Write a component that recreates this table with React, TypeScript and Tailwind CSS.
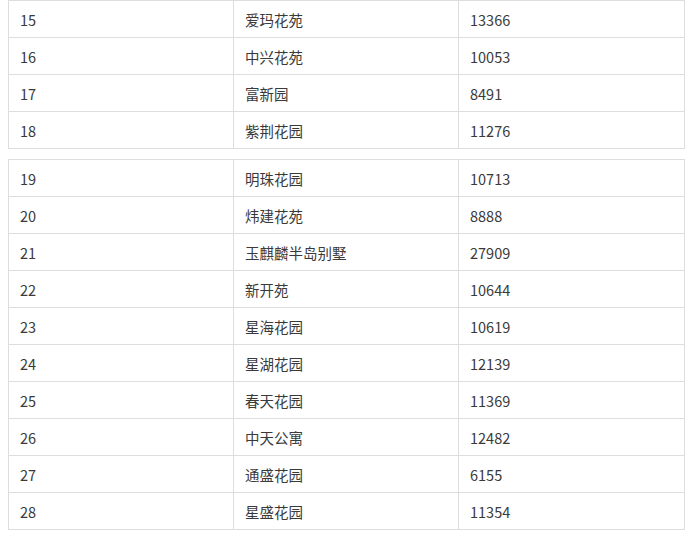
import React from "react";

const first = [
  ["15", "爱玛花苑", "13366"],
  ["16", "中兴花苑", "10053"],
  ["17", "富新园", "8491"],
  ["18", "紫荆花园", "11276"],
];

const second = [
  ["19", "明珠花园", "10713"],
  ["20", "炜建花苑", "8888"],
  ["21", "玉麒麟半岛别墅", "27909"],
  ["22", "新开苑", "10644"],
  ["23", "星海花园", "10619"],
  ["24", "星湖花园", "12139"],
  ["25", "春天花园", "11369"],
  ["26", "中天公寓", "12482"],
  ["27", "通盛花园", "6155"],
  ["28", "星盛花园", "11354"],
];

function Table({ rows }: { rows: string[][] }) {
  return (
    <div className="w-[677px] border-l border-t border-[#dddddd] grid grid-cols-[225px_225px_226px]">
      {rows.map((row) =>
        row.map((cell, i) => (
          <div
            key={row[0] + i}
            className="h-[37px] border-r border-b border-[#dddddd] flex items-center pl-[11px] pt-[2px] text-[14.5px] text-[#3a3a3a]"
          >
            {cell}
          </div>
        ))
      )}
    </div>
  );
}

export default function App() {
  return (
    <div
      className="w-[692px] h-[536px] bg-white pl-[8px]"
      style={{ fontFamily: '"Noto Sans CJK SC", "Noto Sans", sans-serif' }}
    >
      <Table rows={first} />
      <div className="mt-[10px]">
        <Table rows={second} />
      </div>
    </div>
  );
}
